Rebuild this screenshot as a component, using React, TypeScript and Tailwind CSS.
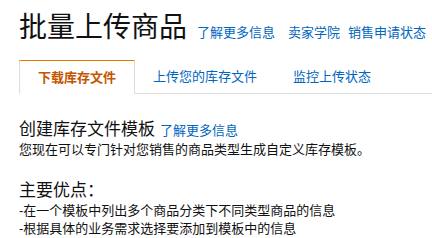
import React from 'react';

const font = { fontFamily: '"Liberation Sans", "Noto Sans CJK SC", sans-serif' };

const tabs = ['下载库存文件', '上传您的库存文件', '监控上传状态'];

export default function App() {
  return (
    <div className="w-[432px] h-[238px] bg-white text-[#111] overflow-hidden" style={font}>
      <div className="flex items-end pl-[19px] pt-[11px]">
        <h1 className="text-[28px] leading-[34px] font-normal">批量上传商品</h1>
        <div className="flex text-[13px] leading-[18px] text-[#0066c0] ml-[10px] mb-[3px]">
          <a className="mr-[13px]">了解更多信息</a>
          <a className="mr-[8px]">卖家学院</a>
          <a>销售申请状态</a>
        </div>
      </div>

      <div className="flex mt-[15px] ml-[19px] border-b border-[#ddd] h-[34px]">
        {tabs.map((t, i) =>
          i === 0 ? (
            <div
              key={t}
              className="px-[18px] flex items-center border-t border-t-[#e77600] border-x border-x-[#ddd] bg-white text-[#c45500] font-bold text-[13px] -mb-px"
            >
              {t}
            </div>
          ) : (
            <div key={t} className="px-[18px] flex items-center text-[#0066c0] text-[13px]">
              {t}
            </div>
          )
        )}
      </div>

      <div className="pl-[19px] pt-[25px]">
        <div className="flex items-end">
          <h2 className="text-[17px] leading-[22px] font-normal">创建库存文件模板</h2>
          <a className="text-[13px] leading-[18px] text-[#0066c0] ml-[5px] mb-px">了解更多信息</a>
        </div>
        <p className="text-[13px] leading-[17px]">您现在可以专门针对您销售的商品类型生成自定义库存模板。</p>

        <h2 className="text-[17px] leading-[22px] font-normal mt-[22px]">主要优点：</h2>
        <p className="text-[13px] leading-[18px]">-在一个模板中列出多个商品分类下不同类型商品的信息</p>
        <p className="text-[13px] leading-[18px]">-根据具体的业务需求选择要添加到模板中的信息</p>
      </div>
    </div>
  );
}
